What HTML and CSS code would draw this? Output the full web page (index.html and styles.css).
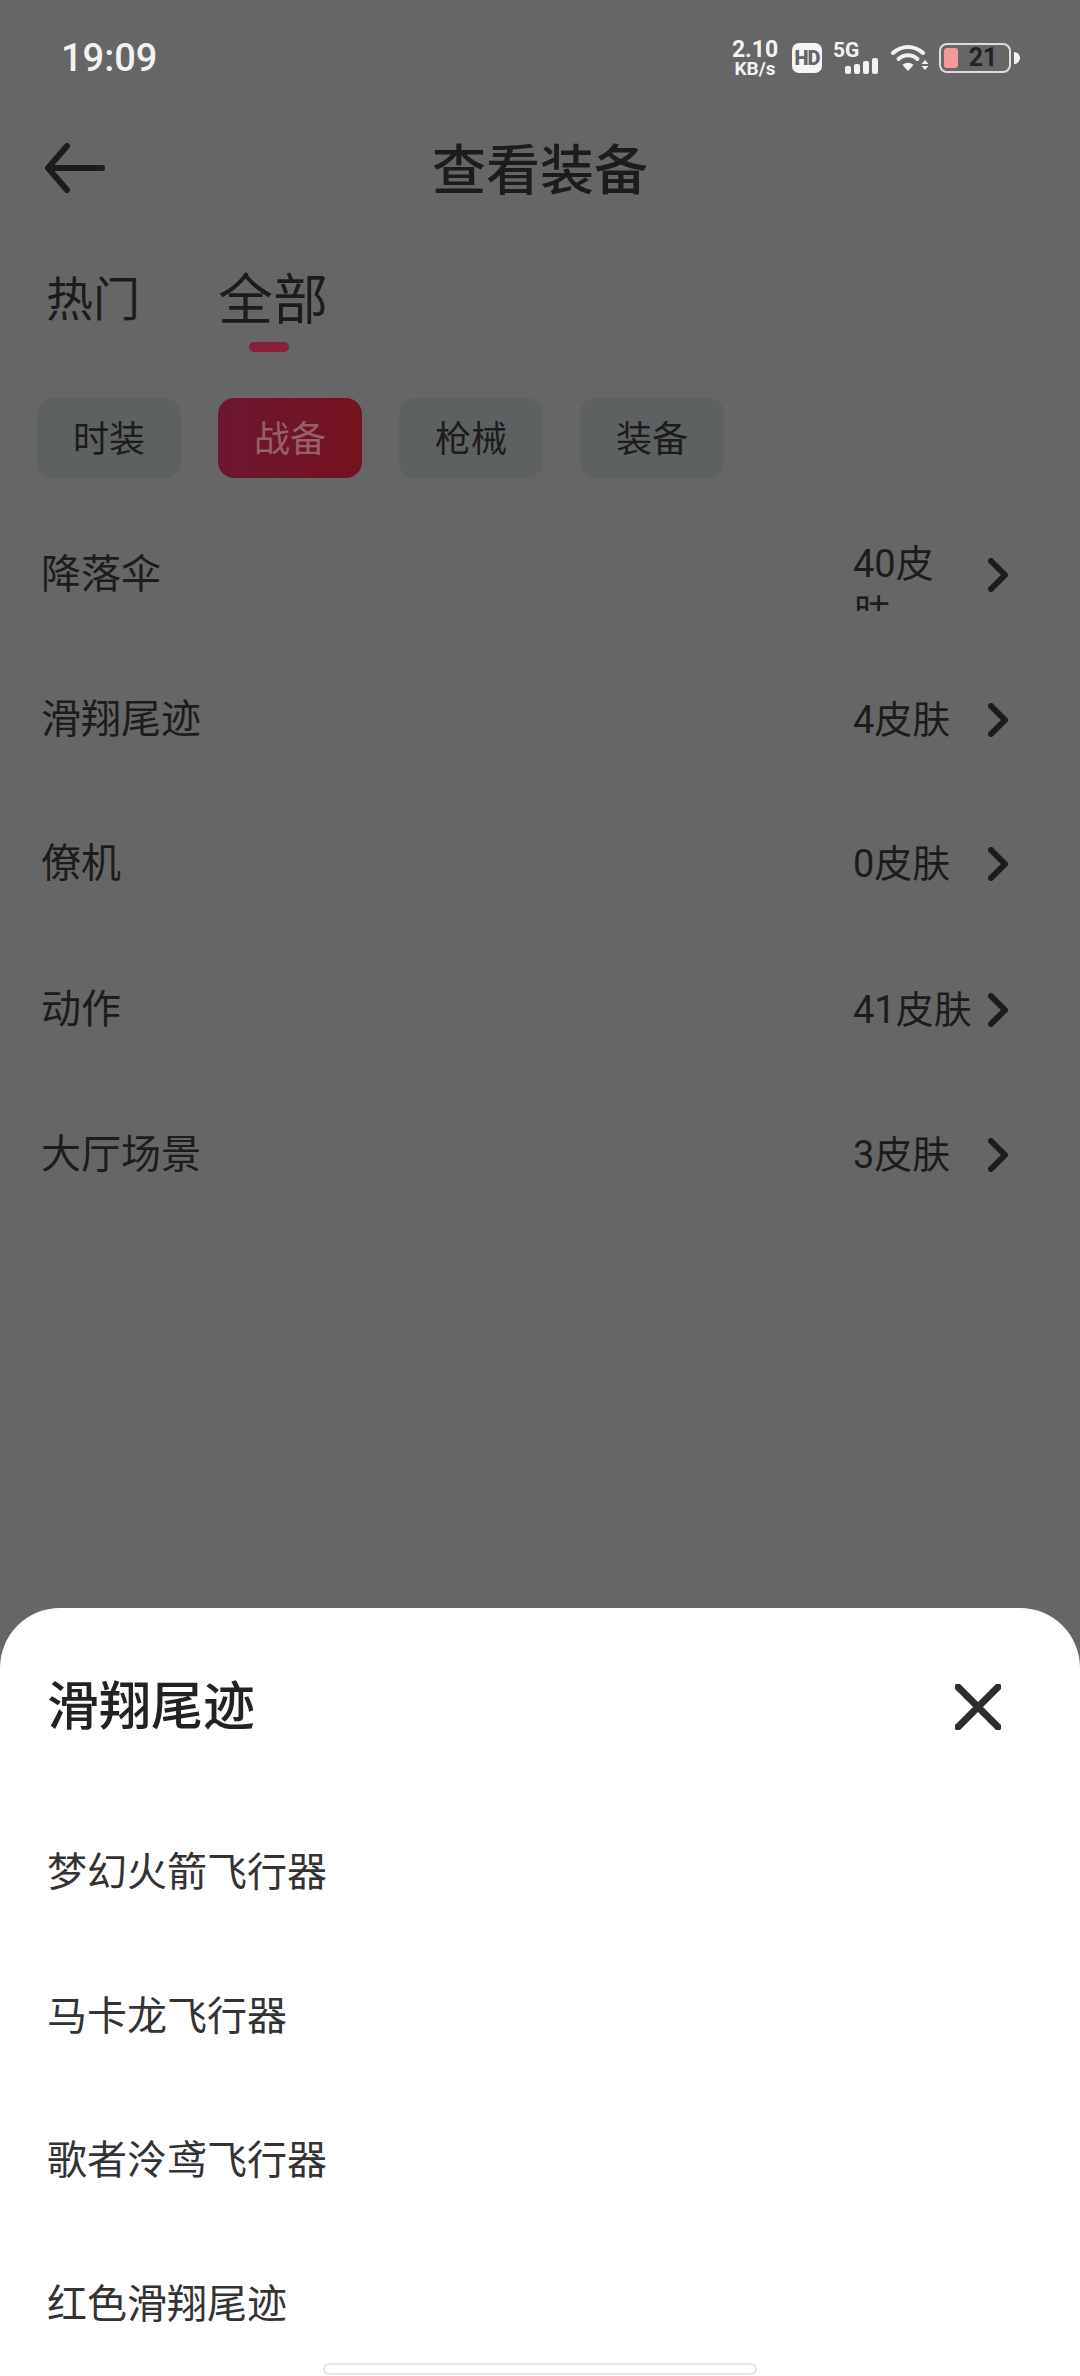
FILE: index.html
```html
<!DOCTYPE html>
<html lang="zh-CN">
<head>
  <meta charset="UTF-8" />
  <meta name="viewport" content="width=device-width, initial-scale=1" />
  <title>查看装备</title>
  <link rel="stylesheet" href="styles.css">
</head>
<body>
  <div class="pantalla">

    <div class="barra-estado">
      <span class="hora">19:09</span>
      <div class="iconos-estado">
        <div class="velocidad">
          <span class="vel-num">2.10</span>
          <span class="vel-unidad">KB/s</span>
        </div>
        <span class="hd">HD</span>
        <div class="red">
          <span class="red-5g">5G</span>
          <div class="red-barras">
            <i class="b1"></i><i class="b2"></i><i class="b3"></i><i class="b4"></i>
          </div>
        </div>
        <svg class="wifi" width="38" height="28" viewBox="0 0 38 28">
          <path d="M2 9 C11 1 23 1 32 9" fill="none" stroke="#f2f2f2" stroke-width="4" stroke-linecap="round" />
          <path d="M7.500 15 C13 10 21 10 26.500 15" fill="none" stroke="#f2f2f2" stroke-width="4" stroke-linecap="round" />
          <path d="M11.500 21 L17 27 L22.500 21 C19 18 15 18 11.500 21 Z" fill="#f2f2f2" />
          <path d="M34 16 L37.500 20 L30.500 20 Z" fill="#f2f2f2" />
          <path d="M30.500 22 L37.500 22 L34 26 Z" fill="#f2f2f2" />
        </svg>
        <div class="bateria">
          <div class="bateria-caja">
            <i class="bateria-nivel"></i>
            <span class="bateria-num">21</span>
          </div>
          <i class="bateria-punta"></i>
        </div>
      </div>
    </div>

    <div class="encabezado">
      <svg class="volver" width="60" height="50" viewBox="0 0 60 50">
        <path d="M22 3 L3 25 L22 47 M4 25 L57 25" fill="none" stroke="#1c1c1c" stroke-width="6" stroke-linecap="round" stroke-linejoin="round" />
      </svg>
      <h1>查看装备</h1>
    </div>

    <div class="pestanas">
      <div class="pestana">热门</div>
      <div class="pestana activa">全部</div>
    </div>

    <div class="chips">
      <div class="chip">时装</div>
      <div class="chip activo">战备</div>
      <div class="chip">枪械</div>
      <div class="chip">装备</div>
    </div>

    <div class="lista">
      <div class="fila">
        <span class="fila-nombre">降落伞</span>
        <span class="fila-cuenta">40皮<br>肤</span>
        <svg class="flecha" width="20" height="34" viewBox="0 0 20 34"><path d="M3 3 L17 17 L3 31" /></svg>
      </div>
      <div class="fila">
        <span class="fila-nombre">滑翔尾迹</span>
        <span class="fila-cuenta">4皮肤</span>
        <svg class="flecha" width="20" height="34" viewBox="0 0 20 34"><path d="M3 3 L17 17 L3 31" /></svg>
      </div>
      <div class="fila con-linea">
        <span class="fila-nombre">僚机</span>
        <span class="fila-cuenta">0皮肤</span>
        <svg class="flecha" width="20" height="34" viewBox="0 0 20 34"><path d="M3 3 L17 17 L3 31" /></svg>
      </div>
      <div class="fila">
        <span class="fila-nombre">动作</span>
        <span class="fila-cuenta">41皮肤</span>
        <svg class="flecha" width="20" height="34" viewBox="0 0 20 34"><path d="M3 3 L17 17 L3 31" /></svg>
      </div>
      <div class="fila">
        <span class="fila-nombre">大厅场景</span>
        <span class="fila-cuenta">3皮肤</span>
        <svg class="flecha" width="20" height="34" viewBox="0 0 20 34"><path d="M3 3 L17 17 L3 31" /></svg>
      </div>
    </div>

    <!-- Hoja inferior -->
    <div class="hoja">
      <div class="hoja-cabeza">
        <h2>滑翔尾迹</h2>
        <svg class="cerrar" width="46" height="46" viewBox="0 0 46 46">
          <path d="M3 3 L43 43 M43 3 L3 43" fill="none" stroke="#2e2e2e" stroke-width="7" stroke-linecap="round" />
        </svg>
      </div>
      <div class="hoja-item">梦幻火箭飞行器</div>
      <div class="hoja-item">马卡龙飞行器</div>
      <div class="hoja-item">歌者泠鸢飞行器</div>
      <div class="hoja-item">红色滑翔尾迹</div>
      <div class="indicador"></div>
    </div>

  </div>
</body>
</html>
```

FILE: styles.css
```css
* {
  box-sizing: border-box;
}

body {
  margin: 0;
  font-family: Roboto, 'Noto Sans CJK SC', sans-serif;
  background-color: #666666;
  color: #1c1c1c;
}

.pantalla {
  position: relative;
  width: 1080px;
  height: 2376px;
  overflow: hidden;
  background-color: #666666;
}

/* barra de estado */
.barra-estado {
  height: 114px;
  padding: 2px 60px 0 61px;
  display: flex;
  align-items: center;
  justify-content: space-between;
  color: #f2f2f2;
}

.hora {
  font-size: 38px;
  font-weight: 500;
}

.iconos-estado {
  display: flex;
  align-items: center;
}

.velocidad {
  width: 46px;
  margin-right: 14px;
  display: flex;
  flex-direction: column;
  align-items: center;
  font-weight: 700;
}

.vel-num {
  font-size: 23px;
  line-height: 21px;
}

.vel-unidad {
  font-size: 19px;
  line-height: 17px;
}

.hd {
  width: 30px;
  height: 30px;
  margin-right: 11px;
  background-color: #f5f5f5;
  color: #666666;
  border-radius: 7px;
  font-size: 20px;
  font-weight: 900;
  line-height: 30px;
  text-align: center;
  letter-spacing: -1px;
}

.red {
  width: 45px;
  height: 31px;
  margin-right: 13px;
  position: relative;
}

.red-5g {
  position: absolute;
  top: -3px;
  left: 0;
  font-size: 21px;
  font-weight: 700;
  line-height: 20px;
}

.red-barras {
  position: absolute;
  right: 0;
  bottom: 0;
  display: flex;
  align-items: flex-end;
  gap: 3px;
}

.red-barras i {
  width: 6px;
  background-color: #f2f2f2;
  border-radius: 2px;
}

.b1 { height: 8px; }
.b2 { height: 10px; }
.b3 { height: 13px; }
.b4 { height: 16px; }

.wifi {
  margin-right: 10px;
}

.bateria {
  display: flex;
  align-items: center;
  gap: 3px;
}

.bateria-caja {
  position: relative;
  width: 72px;
  height: 30px;
  border: 2px solid #dddddd;
  border-radius: 8px;
  display: flex;
  align-items: center;
  justify-content: center;
  padding-left: 16px;
}

.bateria-nivel {
  position: absolute;
  left: 3px;
  top: 3px;
  bottom: 3px;
  width: 14px;
  background-color: #f59a9a;
  border-radius: 3px;
}

.bateria-num {
  font-size: 25px;
  font-weight: 700;
  color: #222;
  line-height: 26px;
}

.bateria-punta {
  width: 6px;
  height: 12px;
  background-color: #f2f2f2;
  border-radius: 0 6px 6px 0;
}

/* encabezado */
.encabezado {
  height: 112px;
  padding-left: 45px;
  display: grid;
  grid-template-columns: 1fr auto 1fr;
  align-items: center;
}

.volver {
  margin-top: -4px;
}

.encabezado h1 {
  margin: 0;
  font-size: 54px;
  font-weight: 500;
  line-height: 76px;
  padding: 4px 45px 0 0;
}

/* pestañas */
.pestanas {
  margin-top: 38px;
  padding-left: 46px;
  display: flex;
  align-items: flex-start;
  gap: 78px;
}

.pestana {
  position: relative;
  font-size: 47px;
  line-height: 72px;
}

.pestana.activa {
  font-size: 55px;
}

.pestana.activa::after {
  content: "";
  position: absolute;
  left: 31px;
  bottom: -16px;
  width: 40px;
  height: 10px;
  border-radius: 5px;
  background-color: #8a1f3c;
}

/* chips */
.chips {
  margin-top: 62px;
  padding-left: 37px;
  display: flex;
  gap: 37px;
}

.chip {
  width: 144px;
  height: 80px;
  background-color: #5e6161;
  border-radius: 16px;
  font-size: 36px;
  line-height: 84px;
  text-align: center;
}

.chip.activo {
  background: linear-gradient(90deg, #6c1730, #75121f);
  color: #95606c;
}

/* lista */
.lista {
  margin: 24px 40px 0;
}

.fila {
  height: 145px;
  padding: 0 32px 0 1px;
  display: flex;
  align-items: center;
}

.fila.con-linea {
  border-bottom: 1px solid #6a6a6a;
}

.fila-nombre {
  flex: 1;
  font-size: 40px;
  line-height: 54px;
}

.fila-cuenta {
  width: 120px;
  max-height: 72px;
  overflow: hidden;
  margin-right: 15px;
  font-size: 38px;
  line-height: 50px;
  white-space: nowrap;
}

.flecha path {
  fill: none;
  stroke: #1c1c1c;
  stroke-width: 6;
  stroke-linecap: round;
  stroke-linejoin: round;
}

/* hoja inferior */
.hoja {
  position: absolute;
  left: 0;
  right: 0;
  bottom: 0;
  height: 768px;
  overflow: hidden;
  background-color: #ffffff;
  border-radius: 60px 60px 0 0;
  color: #333;
}

.hoja-cabeza {
  height: 194px;
  padding: 64px 79px 0 47px;
  display: flex;
  align-items: flex-start;
  justify-content: space-between;
}

.hoja-cabeza h2 {
  margin: 0;
  font-size: 52px;
  font-weight: 500;
  line-height: 72px;
  color: #222;
}

.cerrar {
  margin-top: 12px;
}

.hoja-item {
  height: 144px;
  padding-left: 47px;
  font-size: 40px;
  line-height: 142px;
}

.indicador {
  position: absolute;
  left: 323px;
  bottom: 1px;
  width: 434px;
  height: 12px;
  background-color: #ffffff;
  border: 2px solid #e6e6e6;
  border-radius: 6px;
}
```
